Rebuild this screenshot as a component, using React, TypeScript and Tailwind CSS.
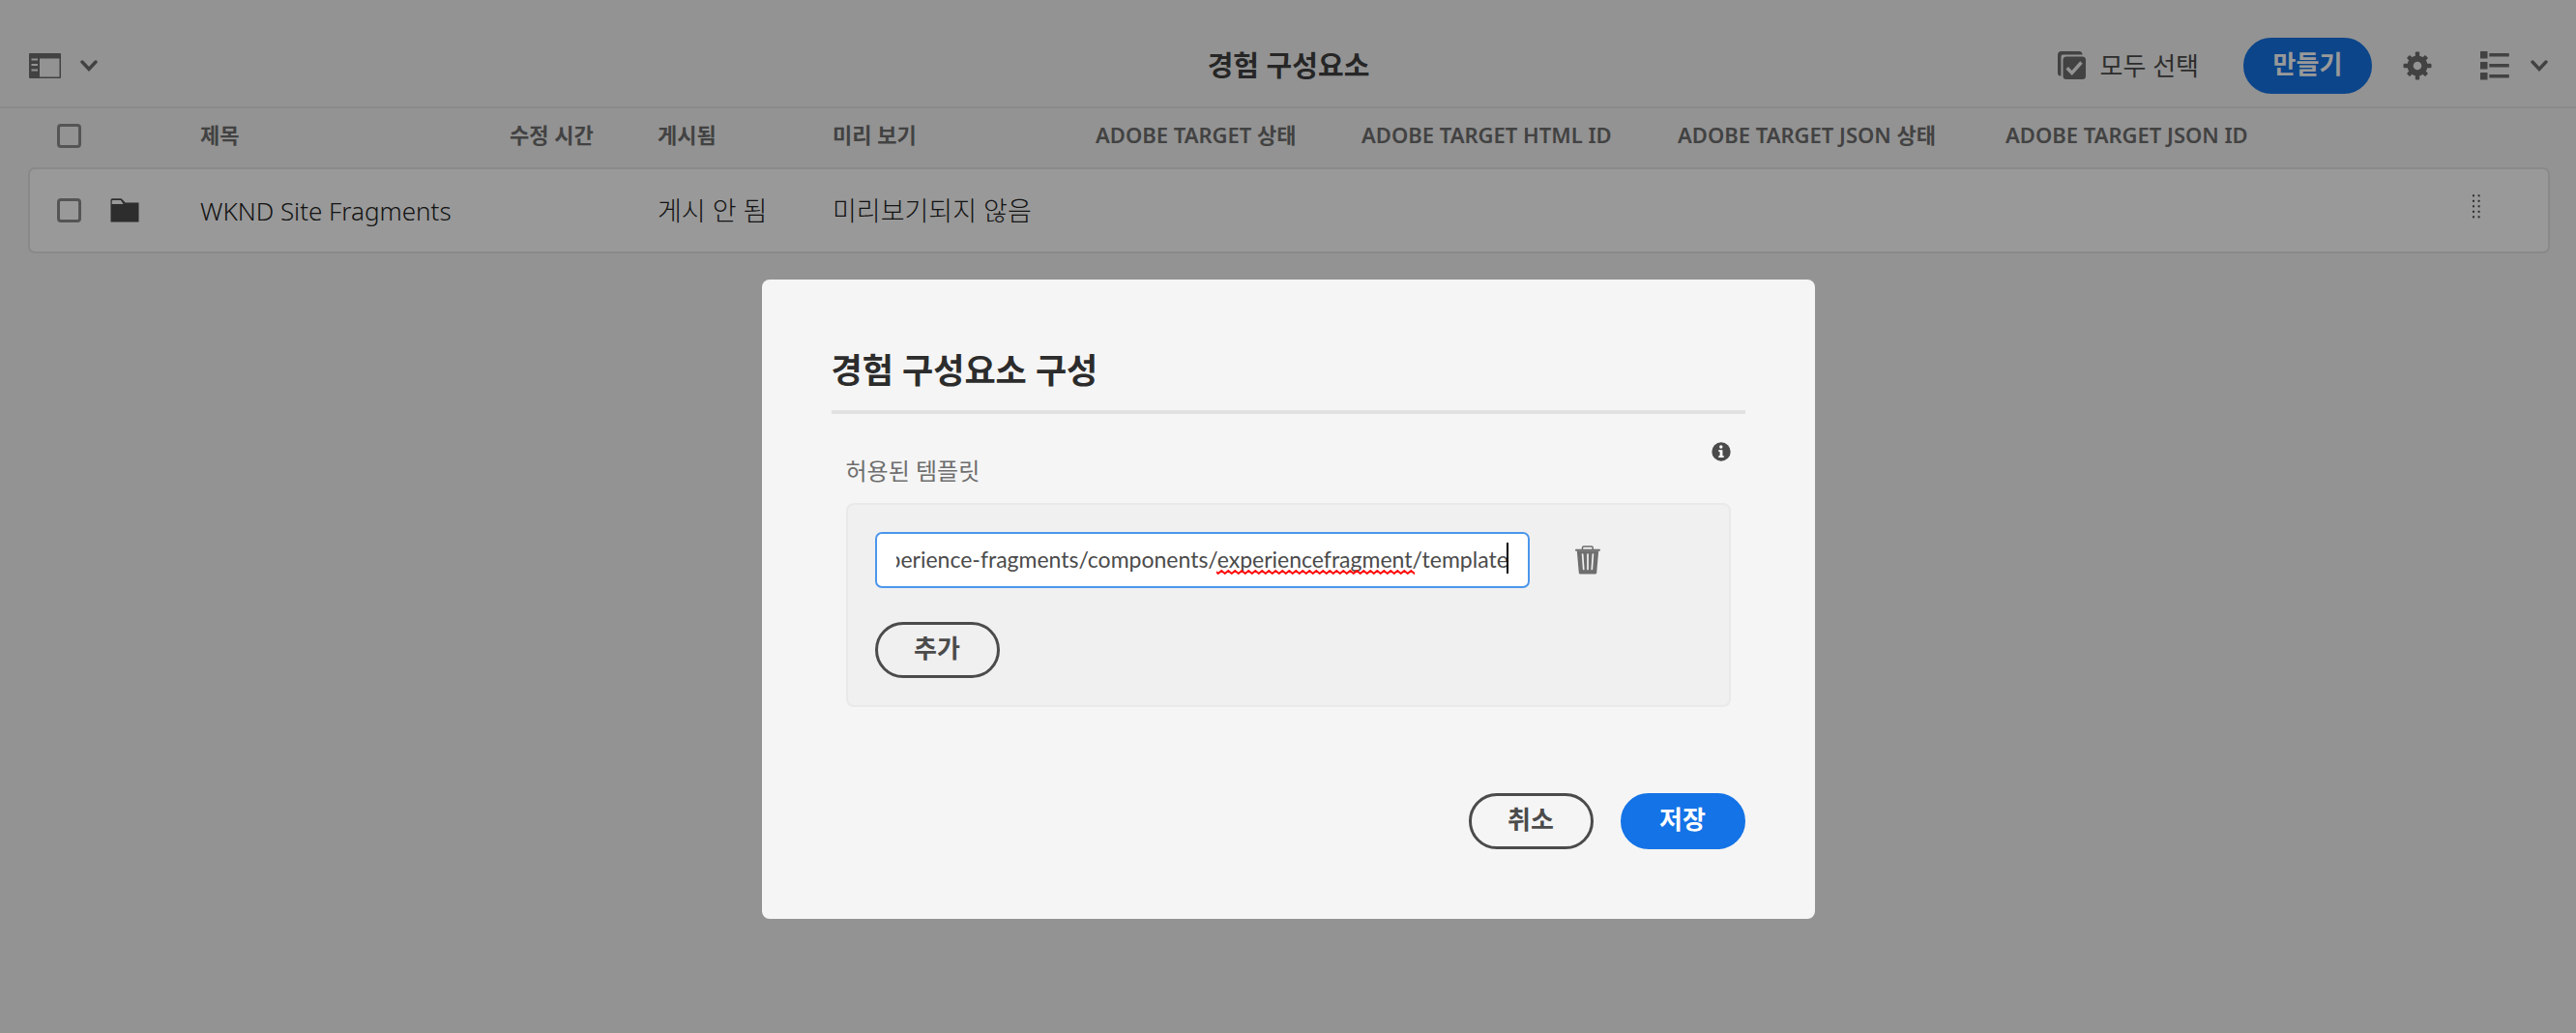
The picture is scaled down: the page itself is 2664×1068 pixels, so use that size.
import { useEffect, useRef } from "react";

const TEMPLATE_PATH =
  "/libs/cq/experience-fragments/components/experiencefragment/template";

const COLUMNS = [
  { label: "제목", width: "w-[320px]" },
  { label: "수정 시간", width: "w-[153px]" },
  { label: "게시됨", width: "w-[181px]" },
  { label: "미리 보기", width: "w-[272px]" },
  { label: "ADOBE TARGET 상태", width: "w-[275px]" },
  { label: "ADOBE TARGET HTML ID", width: "w-[327px]" },
  { label: "ADOBE TARGET JSON 상태", width: "w-[339px]" },
  { label: "ADOBE TARGET JSON ID", width: "w-auto" },
];

function RailIcon() {
  return (
    <svg width="33" height="26" viewBox="0 0 33 26" aria-hidden="true">
      <path
        fillRule="evenodd"
        fill="currentColor"
        d="M1 0H32A1 1 0 0 1 33 1V25A1 1 0 0 1 32 26H1A1 1 0 0 1 0 25V1A1 1 0 0 1 1 0ZM11 5.5V24.5H31.5V5.5ZM2.500 5.500V7.500H9V5.500ZM2.500 11V13H9V11ZM2.500 16.500V18.500H9V16.500Z"
      />
    </svg>
  );
}

function ChevronIcon() {
  return (
    <svg width="18" height="12" viewBox="0 0 18 12" aria-hidden="true">
      <path
        d="M2 2L9 9.500L16 2"
        fill="none"
        stroke="currentColor"
        strokeWidth="3.400"
        strokeLinecap="round"
      />
    </svg>
  );
}

function SelectAllIcon() {
  return (
    <svg width="30" height="30" viewBox="0 0 30 30" aria-hidden="true">
      <path
        fill="currentColor"
        d="M3.500 25.500H3A3 3 0 0 1 0 22.500V4A4 4 0 0 1 4 0H22A3.500 3.500 0 0 1 25.500 3.500H5.500A2 2 0 0 0 3.500 5.500Z"
      />
      <rect x="5.500" y="5.500" width="23.500" height="23.500" rx="3.500" fill="currentColor" />
      <path d="M9.700 17.300L14.700 22.400L24.500 11.500" fill="none" stroke="#f5f5f5" strokeWidth="3.400" />
    </svg>
  );
}

function GearIcon() {
  return (
    <svg width="30" height="30" viewBox="-15 -15 30 30" aria-hidden="true">
      {[0, 45, 90, 135].map((angle) => (
        <rect
          key={angle}
          x="-2.200"
          y={angle % 90 === 0 ? -14.5 : -13.5}
          width="4.400"
          height={angle % 90 === 0 ? 29 : 27}
          rx="1"
          fill="currentColor"
          transform={`rotate(${angle})`}
        />
      ))}
      <circle r="10.500" fill="currentColor" />
      <circle r="4.300" fill="#f5f5f5" />
    </svg>
  );
}

function ListIcon() {
  return (
    <svg width="30" height="30" viewBox="0 0 30 30" fill="currentColor" aria-hidden="true">
      {[0, 11, 22].map((y) => (
        <g key={y}>
          <rect x="0" y={y} width="7.500" height="7.500" rx="0.500" />
          <rect x="9.300" y={y + 2} width="20.500" height="3.600" rx="0.500" />
        </g>
      ))}
    </svg>
  );
}

function FolderIcon() {
  return (
    <svg width="30" height="25" viewBox="0 0 30 25" aria-hidden="true">
      <path
        fill="currentColor"
        fillRule="evenodd"
        d="M0.500 24.500V1.800A1.500 1.500 0 0 1 2 0.300H10.800A2 2 0 0 1 12.300 0.900L15.500 4.500H29.500V24.500ZM1.700 5.900H13.600L10.900 2H2.500A0.800 0.800 0 0 0 1.700 2.800Z"
      />
    </svg>
  );
}

function DragHandleIcon() {
  return (
    <svg width="8" height="25" viewBox="0 0 8 25" fill="currentColor" aria-hidden="true">
      {[0, 5.500, 11, 16.500, 22].map((y) => (
        <g key={y}>
          <rect x="0" y={y + 0.300} width="2" height="2" />
          <rect x="5.600" y={y + 0.300} width="2" height="2" />
        </g>
      ))}
    </svg>
  );
}

function InfoIcon() {
  return (
    <svg width="20" height="20" viewBox="0 0 20 20" aria-hidden="true">
      <circle cx="10" cy="10" r="9.700" fill="#4b4b4b" />
      <circle cx="9.800" cy="5" r="1.700" fill="#fff" />
      <path d="M7.300 8.300H11.400V14.300H12.700V16H7.300V14.300H8.600V10H7.300Z" fill="#fff" />
    </svg>
  );
}

function TrashIcon() {
  return (
    <svg width="26" height="30" viewBox="0 0 26 30" aria-hidden="true">
      <path d="M7.500 4.500V2A1.200 1.200 0 0 1 8.700 0.900H17A1.200 1.200 0 0 1 18.200 2V4.500" fill="none" stroke="currentColor" strokeWidth="1.500" />
      <rect x="0" y="3.800" width="26" height="1.900" rx="0.900" fill="currentColor" />
      <path d="M1.800 5.500H24.200L22.200 28.200A1.500 1.500 0 0 1 20.700 29.500H5.300A1.500 1.500 0 0 1 3.800 28.200Z" fill="currentColor" />
      <path d="M7.600 9L8.700 24.500M13 9V24.500M18.400 9L17.300 24.500" stroke="#f0f0f0" strokeWidth="1.700" strokeLinecap="round" />
    </svg>
  );
}

function SpellingMark() {
  return (
    <svg className="block h-[5px] w-full" aria-hidden="true">
      <defs>
        <pattern id="spelling-wave" width="7" height="5" patternUnits="userSpaceOnUse">
          <path d="M-1.750 1L1.750 4L5.250 1L8.750 4" fill="none" stroke="#ff0000" strokeWidth="1.800" />
        </pattern>
      </defs>
      <rect width="100%" height="5" fill="url(#spelling-wave)" />
    </svg>
  );
}

function Checkbox({ label }: { label: string }) {
  return (
    <input
      type="checkbox"
      aria-label={label}
      className="block size-[25px] appearance-none rounded-[4px] border-[3px] border-[#8e8e8e] bg-transparent"
    />
  );
}

const pill =
  "flex h-[58px] items-center justify-center rounded-full border-[3px] text-[26px] leading-[36px] font-bold pb-1";

function Toolbar() {
  return (
    <header className="grid h-[112px] grid-cols-[1fr_auto_1fr] items-center border-b-2 border-[#e6e6e6] pr-[29px] pl-[30px] pt-[26px] text-[#6e6e6e]">
      <button type="button" aria-label="레일 전환" className="flex items-center gap-[20px] justify-self-start">
        <RailIcon />
        <ChevronIcon />
      </button>
      <h1 className="text-[29px] leading-[40px] font-bold text-[#404040]">경험 구성요소</h1>
      <div className="flex items-center justify-self-end">
        <button type="button" className="mr-[46px] flex items-center gap-[14px] text-[26px] leading-[36px] font-normal text-[#4b4b4b]">
          <span className="text-[#6e6e6e]"><SelectAllIcon /></span>
          모두 선택
        </button>
        <button type="button" className={`${pill} mr-[32px] w-[133px] border-[#1473e6] bg-[#1473e6] text-white`}>
          만들기
        </button>
        <button type="button" aria-label="구성" className="mr-[50px]"><GearIcon /></button>
        <button type="button" aria-label="목록 보기" className="flex items-center gap-[22px]">
          <ListIcon />
          <ChevronIcon />
        </button>
      </div>
    </header>
  );
}

function FragmentTable() {
  const cell = "border-y-2 border-[#e4e4e4] bg-white p-0 text-left";
  return (
    <div className="pr-[27px] pl-[29px]">
      <table className="w-full table-fixed border-separate border-spacing-0">
        <thead>
          <tr className="h-[61px] text-[22px] leading-[28px] text-[#6e6e6e]">
            <th className="w-[178px] p-0 pb-1 pl-[30px] text-left"><Checkbox label="모두 선택" /></th>
            {COLUMNS.map((column) => (
              <th key={column.label} scope="col" className={`${column.width} p-0 pb-2 text-left font-semibold whitespace-nowrap`}>
                {column.label}
              </th>
            ))}
            <th className="w-[80px] p-0" aria-label="순서" />
          </tr>
        </thead>
        <tbody>
          <tr className="h-[89px] text-[27px] leading-[36px] font-light text-[#222222]">
            <td className={`${cell} rounded-l-[7px] border-l-2 pl-[28px]`}>
              <div className="flex items-center gap-[30px]">
                <Checkbox label="WKND Site Fragments 선택" />
                <span className="text-[#4b4b4b]"><FolderIcon /></span>
              </div>
            </td>
            <td className={`${cell} text-[26px] whitespace-nowrap`}>WKND Site Fragments</td>
            <td className={cell} />
            <td className={`${cell} whitespace-nowrap`}>게시 안 됨</td>
            <td className={`${cell} whitespace-nowrap`}>미리보기되지 않음</td>
            <td className={cell} />
            <td className={cell} />
            <td className={cell} />
            <td className={cell} />
            <td className={`${cell} rounded-r-[7px] border-r-2`}>
              <button type="button" aria-label="순서 변경" className="block pb-2 text-[#4b4b4b]"><DragHandleIcon /></button>
            </td>
          </tr>
        </tbody>
      </table>
    </div>
  );
}

function ConfigureDialog() {
  const inputRef = useRef<HTMLInputElement>(null);

  // Keep the end of a long path in view, where the caret is.
  useEffect(() => {
    const input = inputRef.current;
    if (!input) return;
    input.focus();
    input.setSelectionRange(input.value.length, input.value.length);
    input.scrollLeft = input.scrollWidth;
  }, []);

  return (
    <section
      role="dialog"
      aria-modal="true"
      aria-labelledby="dialog-title"
      className="w-[1089px] max-w-[95vw] rounded-[8px] bg-[#f5f5f5] p-[72px] text-[#4b4b4b]"
    >
      <h2 id="dialog-title" className="border-b-4 border-[#e1e1e1] pb-[19px] text-[35px] leading-[44px] font-bold text-[#2c2c2c]">
        경험 구성요소 구성
      </h2>
      <div className="px-[15px] pt-[29px]">
        <div className="flex h-[48px] justify-between">
          <label htmlFor="template-path" className="self-end text-[24px] leading-[36px] text-[#6e6e6e]">
            허용된 템플릿
          </label>
          <button type="button" aria-label="정보" className="self-start"><InfoIcon /></button>
        </div>
        <div className="mt-[15px] rounded-[8px] border-2 border-[#e9e9e9] bg-[#f0f0f0] p-[28px]">
          <div className="flex items-center gap-[47px]">
            <div className="relative w-[677px]">
              <input
                id="template-path"
                ref={inputRef}
                type="text"
                spellCheck={false}
                defaultValue={TEMPLATE_PATH}
                className="block h-[58px] w-full rounded-[7px] border-2 border-[#4b96ec] bg-white px-[20px] pb-[2px] font-['Lato'] text-[23px] leading-[36px] text-[#4b4b4b] caret-transparent outline-none"
              />
              <span className="pointer-events-none absolute top-[11px] right-[22px] h-[32px] w-[2px] bg-black" />
              <span className="pointer-events-none absolute right-[119px] bottom-[14px] w-[205px]">
                <SpellingMark />
              </span>
            </div>
            <button type="button" aria-label="삭제" className="text-[#6e6e6e]"><TrashIcon /></button>
          </div>
          <button type="button" className={`${pill} mt-[35px] w-[129px] border-[#4b4b4b]`}>추가</button>
        </div>
      </div>
      <footer className="mt-[89px] flex justify-end gap-[28px]">
        <button type="button" className={`${pill} w-[129px] border-[#4b4b4b]`}>취소</button>
        <button type="button" className={`${pill} w-[129px] border-[#1473e6] bg-[#1473e6] text-white`}>저장</button>
      </footer>
    </section>
  );
}

export default function App() {
  return (
    <div className="min-h-screen bg-[#f5f5f5] font-['Noto_Sans','Noto_Sans_CJK_KR',sans-serif]">
      <Toolbar />
      <FragmentTable />
      <div className="fixed inset-0 flex items-start justify-center bg-black/40 pt-[289px]">
        <ConfigureDialog />
      </div>
    </div>
  );
}
